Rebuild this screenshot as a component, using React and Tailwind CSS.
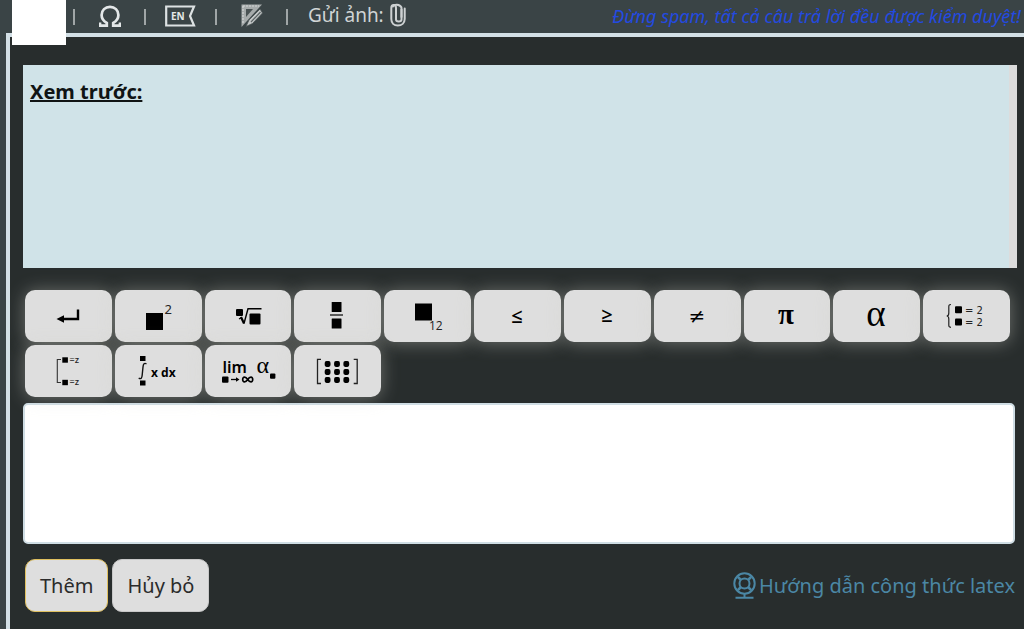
import React from "react";

const sans = "font-['Noto_Sans','Open_Sans',sans-serif]";

const keys = [
  {
    label: "Xuống dòng",
    art: (
      <>
        <path d="M53 19.5V29H37" fill="none" stroke="#000" strokeWidth="2.4" />
        <path d="M31.5 29L39 25.2V32.8Z" />
      </>
    ),
  },
  {
    label: "Số mũ",
    art: (
      <>
        <rect x="31" y="23" width="17" height="17" />
        <text x="49.5" y="24" className="text-[13px]" fill="#222">2</text>
      </>
    ),
  },
  {
    label: "Căn bậc n",
    art: (
      <>
        <rect x="31" y="19" width="7" height="7" rx="1" />
        <path d="M34 29L36.5 27.5" fill="none" stroke="#000" strokeWidth="1.2" />
        <path d="M36 27L39 33.5" fill="none" stroke="#000" strokeWidth="2.2" />
        <path d="M39 33.5L43 18.7H56.5" fill="none" stroke="#000" strokeWidth="1.4" />
        <rect x="44.5" y="23.5" width="11" height="11" rx="1" />
      </>
    ),
  },
  {
    label: "Phân số",
    art: (
      <>
        <rect x="37.7" y="12" width="9.8" height="10" rx="0.5" />
        <path d="M36 25H49" stroke="#000" strokeWidth="1.2" />
        <rect x="37.7" y="28.5" width="9.8" height="10" rx="0.5" />
      </>
    ),
  },
  {
    label: "Chỉ số dưới",
    art: (
      <>
        <rect x="31" y="13.5" width="17" height="17" />
        <text x="45" y="40" className="font-['Open_Sans',sans-serif] text-[12px] font-medium" fill="#222">12</text>
      </>
    ),
  },
  { label: "Nhỏ hơn hoặc bằng", art: <text x="43" y="33" textAnchor="middle" className="font-['Open_Sans',sans-serif] text-[20px] font-semibold">≤</text> },
  { label: "Lớn hơn hoặc bằng", art: <text x="43" y="32" textAnchor="middle" className="font-['Open_Sans',sans-serif] text-[20px] font-semibold">≥</text> },
  { label: "Khác", art: <text x="43" y="33" textAnchor="middle" className="font-['DejaVu_Serif',serif] text-[20px]">≠</text> },
  { label: "Pi", art: <text x="43" y="34" textAnchor="middle" className="font-['Liberation_Serif',serif] text-[29px] font-bold">π</text> },
  { label: "Alpha", art: <text x="43" y="36" textAnchor="middle" className="font-['Liberation_Serif',serif] text-[37px]">α</text> },
  {
    label: "Hệ phương trình",
    art: (
      <>
        <path d="M28 14.5C25.5 14.5 25.8 16 25.8 18V23C25.8 25 25.5 26 23.7 26C25.5 26 25.8 27 25.8 29V34C25.8 36 25.5 37.3 28 37.3" fill="none" stroke="#222" strokeWidth="1.2" />
        <rect x="32" y="16.3" width="7" height="7" rx="1" />
        <rect x="32" y="28.5" width="7" height="7" rx="1" />
        <text x="42" y="24" className="font-['DejaVu_Sans',sans-serif] text-[10px]" fill="#222">= 2</text>
        <text x="42" y="36" className="font-['DejaVu_Sans',sans-serif] text-[10px]" fill="#222">= 2</text>
      </>
    ),
  },
  {
    label: "Hệ điều kiện",
    art: (
      <>
        <path d="M36 14.5H32.3V37.5H36" fill="none" stroke="#333" strokeWidth="1.1" />
        <rect x="37.3" y="12.3" width="5.6" height="5.4" />
        <rect x="37.3" y="34.8" width="5.6" height="5.4" />
        <text x="44.5" y="18" className="text-[9px] font-medium" fill="#222">=z</text>
        <text x="44.5" y="40" className="text-[9px] font-medium" fill="#222">=z</text>
      </>
    ),
  },
  {
    label: "Tích phân",
    art: (
      <>
        <rect x="25" y="11" width="5.5" height="5" />
        <path d="M31.5 18.8C29 17.5 28.3 19.3 28 22L27.2 30C27 33 26 34.4 23.7 33.2" fill="none" stroke="#111" strokeWidth="1.4" />
        <rect x="25" y="35.5" width="5.5" height="5" />
        <text x="36" y="32" className="text-[12px] font-bold">x dx</text>
      </>
    ),
  },
  {
    label: "Giới hạn",
    art: (
      <>
        <text x="17.5" y="28" className="text-[16px] font-semibold">lim</text>
        <rect x="17" y="31.5" width="6.5" height="6.3" rx="1" />
        <path d="M26 34.5H32" stroke="#000" strokeWidth="1.3" />
        <path d="M34.5 34.5L31 32.3V36.7Z" />
        <path d="M42.7 34.5C40.7 31.5 37.7 31.4 37.7 34.5S40.7 37.5 42.7 34.5S47.7 31.4 47.7 34.5S44.7 37.5 42.7 34.5Z" fill="none" stroke="#000" strokeWidth="1.7" />
        <text x="51.5" y="28" className="font-['Liberation_Serif',serif] text-[24px]">α</text>
        <rect x="65" y="28.5" width="5.4" height="5.2" rx="1" />
      </>
    ),
  },
  {
    label: "Ma trận",
    art: (
      <>
        <path d="M27 14.3H23.5V38.5H27M59.7 14.3H63.2V38.5H59.7" fill="none" stroke="#222" strokeWidth="1.3" />
        {[19, 27, 35].map((y) =>
          [33.6, 43, 52.3].map((x) => (
            <rect key={`${x}-${y}`} x={x - 2.9} y={y - 2.9} width="5.8" height="5.8" rx="1.8" />
          ))
        )}
      </>
    ),
  },
];

function Separator() {
  return <span aria-hidden="true" className="h-4 w-[2px] shrink-0 bg-[#a0a6a7]" />;
}

function ToolButton({ label, children }) {
  return (
    <button type="button" aria-label={label} className="flex w-[69px] shrink-0 items-center justify-center pb-[2px]">
      {children}
    </button>
  );
}

function Toolbar() {
  return (
    <header className="flex h-[33px] items-start justify-between">
      <div className="flex items-start">
        <div className="relative z-10 ml-3 mr-[7px] h-[45px] w-[54px] shrink-0 bg-white" />
        <div className="flex h-[33px] items-center">
          <Separator />
          <ToolButton label="Ký hiệu đặc biệt">
            <svg width="22" height="24" viewBox="0 0 22 24" fill="none" stroke="#e3e7e8" strokeWidth="2.7">
              <path d="M1 18.5V21.6H7.8V19C4.3 17 2.6 14.4 2.6 11C2.6 6.2 6.2 2.8 11 2.8S19.4 6.2 19.4 11C19.4 14.4 17.7 17 14.2 19V21.6H21V18.5" />
            </svg>
          </ToolButton>
          <Separator />
          <ToolButton label="Bộ gõ tiếng Anh">
            <svg width="31" height="22" viewBox="0 0 31 22">
              <path d="M1.2 1.5H29L25 11L29 20.5H1.2Z" fill="none" stroke="#dde2e3" strokeWidth="2.2" />
              <text x="6" y="14.7" className="text-[10px] font-bold" fill="#e3e7e8">EN</text>
            </svg>
          </ToolButton>
          <Separator />
          <ToolButton label="Vẽ hình">
            <svg width="22" height="26" viewBox="0 0 22 26">
              <path d="M0.5 1.5H21L0.5 24Z" fill="#a6abab" />
              <path d="M5 6H12L5 14Z" fill="#4a5354" />
              <path d="M2 3H18M2 3V20" stroke="#d4d7d7" strokeWidth="1.2" strokeDasharray="2 1" />
              <path d="M19 6L8 17L5 23.5L11.5 20.5L21.5 10Z" fill="#c3c7c7" stroke="#4a5354" strokeWidth="0.8" />
              <path d="M19.5 9L10 19" stroke="#5b6364" strokeWidth="1.2" />
            </svg>
          </ToolButton>
          <Separator />
          <button type="button" className="ml-5 flex items-center gap-[6px] whitespace-nowrap pb-1 text-[19px] leading-6 text-[#d0d4d5]">
            <span>Gửi ảnh:</span>
            <svg width="16" height="24" viewBox="0 0 16 24" fill="none" stroke="#cdd1d2" strokeWidth="2" strokeLinecap="round">
              <path d="M11.5 6V16.5C11.5 19 6 19 6 16.5V5C6 3.5 5.3 2 3.7 2S1.3 3.5 1.3 5V16C1.3 20 4 22.5 7.8 22.5S14.7 20 14.7 16V5.5" />
              <path d="M3 3.5C4 1 9.8 0.8 11.5 4.5M11.5 6V14" />
            </svg>
          </button>
        </div>
      </div>
      <p className="whitespace-nowrap pr-[3px] pt-1 text-[18px] italic leading-6 text-[#234ae0]">
        Đừng spam, tất cả câu trả lời đều được kiểm duyệt!
      </p>
    </header>
  );
}

function MathKey({ label, children }) {
  return (
    <button
      type="button"
      aria-label={label}
      className="flex h-[52px] min-w-0 items-center justify-center rounded-[10px] bg-[#dedede] shadow-[0_1px_18px_rgba(210,210,200,0.42)]"
    >
      <svg className="h-[52px] w-[87px] shrink-0" viewBox="0 0 87 52">
        {children}
      </svg>
    </button>
  );
}

export default function App() {
  return (
    <div className={`flex min-h-screen flex-col bg-[#3a4446] ${sans}`}>
      <Toolbar />
      <main className="ml-[6px] flex-1 border-l-4 border-t-4 border-[#d3e0e6] bg-[#282d2d] pb-4 pl-[13px] pr-[7px] pt-7">
        <section className="h-[203px] border-r-8 border-[#dcdcdc] bg-[#d0e3e8] px-[7px] pt-[13px]">
          <h2 className="text-[20px] font-bold leading-7 text-[#101414] underline">Xem trước:</h2>
        </section>

        <div className="mt-[22px] grid grid-cols-11 gap-[3px] pl-[2px] pr-[7px]">
          {keys.map((k) => (
            <MathKey key={k.label} label={k.label}>
              {k.art}
            </MathKey>
          ))}
        </div>

        <div className="mr-[2px] mt-[6px]">
          <textarea
            aria-label="Công thức latex"
            className="block h-[141px] w-full resize-none rounded-[5px] border-2 border-[#cfdde4] bg-white p-2 text-[20px] outline-none"
          />
        </div>

        <div className="mt-[15px] flex items-center justify-between pl-[2px] pr-[2px]">
          <div className="flex gap-1">
            <button type="button" className="h-[53px] rounded-[10px] border border-[#e0c060] bg-[#dedede] px-[14px] text-[20px] text-[#2b2b2b]">
              Thêm
            </button>
            <button type="button" className="h-[53px] rounded-[10px] border border-[#c8c8c8] bg-[#dedede] px-[14px] text-[20px] text-[#2b2b2b]">
              Hủy bỏ
            </button>
          </div>
          <a href="#latex" className="flex items-center gap-[3px] whitespace-nowrap text-[20px] leading-7 text-[#4b87a5]">
            <svg width="23" height="27" viewBox="0 0 23 27" fill="none" stroke="currentColor" strokeWidth="2">
              <circle cx="11.5" cy="11.5" r="10.2" />
              <circle cx="11.5" cy="11.5" r="5" />
              <path d="M4.8 4.8L8 8M18.2 4.8L15 8M4.8 18.2L8 15M18.2 18.2L15 15" strokeWidth="2.6" />
              <path d="M11.5 21.5V25.5M2.5 25.8H20.5" />
            </svg>
            <span>Hướng dẫn công thức latex</span>
          </a>
        </div>
      </main>
    </div>
  );
}
